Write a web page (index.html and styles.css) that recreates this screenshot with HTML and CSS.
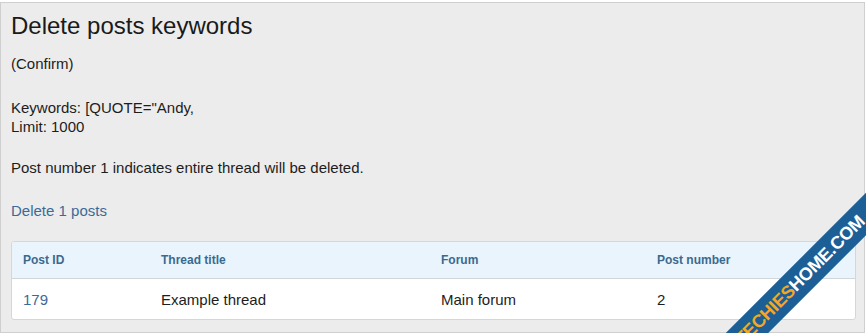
FILE: index.html
```html
<!DOCTYPE html>
<html lang="en">
<head>
    <meta charset="UTF-8">
    <title>Delete posts keywords</title>
    <link rel="stylesheet" href="styles.css">
</head>
<body>
    <div class="panel">
        <h1>Delete posts keywords</h1>
        <p class="confirm">(Confirm)</p>
        <p class="info">Keywords: [QUOTE="Andy,<br>Limit: 1000</p>
        <p class="note">Post number 1 indicates entire thread will be deleted.</p>
        <p class="action"><a href="#">Delete 1 posts</a></p>

        <table class="posts">
            <thead>
                <tr>
                    <th class="col-id">Post ID</th>
                    <th class="col-title">Thread title</th>
                    <th class="col-forum">Forum</th>
                    <th>Post number</th>
                </tr>
            </thead>
            <tbody>
                <tr>
                    <td><a href="#">179</a></td>
                    <td>Example thread</td>
                    <td>Main forum</td>
                    <td>2</td>
                </tr>
            </tbody>
        </table>
    </div>

    <div class="ribbon"><span class="ribbon-a">TECHIES</span><span class="ribbon-b">HOME.COM</span></div>
</body>
</html>
```

FILE: styles.css
```css
html, body {
    margin: 0;
    padding: 0;
}
body {
    font-family: "Liberation Sans", Arial, sans-serif;
    color: #1d1d1d;
    background: #fff;
    width: 866px;
    height: 333px;
    box-sizing: border-box;
    padding-top: 2px;
    overflow: hidden;
    position: relative;
}
.panel {
    box-sizing: border-box;
    height: 331px;
    width: 865px;
    background: #ececec;
    border: 1px solid #cfcfcf;
    padding: 8px 9px 0 10px;
}
h1 {
    margin: 0;
    font-size: 24px;
    font-weight: normal;
    line-height: 30px;
    color: #1a1a1a;
}
p {
    margin: 0;
    font-size: 15px;
    line-height: 19px;
}
.confirm {
    margin-top: 13px;
}
.info {
    margin-top: 25px;
}
.note {
    margin-top: 22px;
}
.action {
    margin-top: 24px;
}
a {
    color: #3a6b98;
    text-decoration: none;
}
.posts {
    margin-top: 21px;
    width: 845px;
    border-collapse: separate;
    border-spacing: 0;
    background: #fff;
    border: 1px solid #d6d6d6;
    border-radius: 3px;
    overflow: hidden;
}
.posts th {
    background: #eaf4fc;
    color: #3a6a8e;
    font-size: 12px;
    font-weight: bold;
    text-align: left;
    height: 36px;
    padding: 0 11px;
    border-bottom: 1px solid #cfd6dc;
}
.posts td {
    font-size: 15px;
    height: 40px;
    padding: 0 11px;
}
.col-id {
    width: 116px;
}
.col-title {
    width: 258px;
}
.col-forum {
    width: 194px;
}
.ribbon {
    position: absolute;
    right: -84px;
    bottom: 38px;
    width: 300px;
    height: 30px;
    line-height: 30px;
    background: #1c5e96;
    transform: rotate(-45deg);
    text-align: center;
    font-family: "Liberation Sans", Arial, sans-serif;
    font-weight: bold;
    font-size: 18px;
    letter-spacing: -0.3px;
}
.ribbon-a {
    color: #f5a623;
}
.ribbon-b {
    color: #fff;
}
```
